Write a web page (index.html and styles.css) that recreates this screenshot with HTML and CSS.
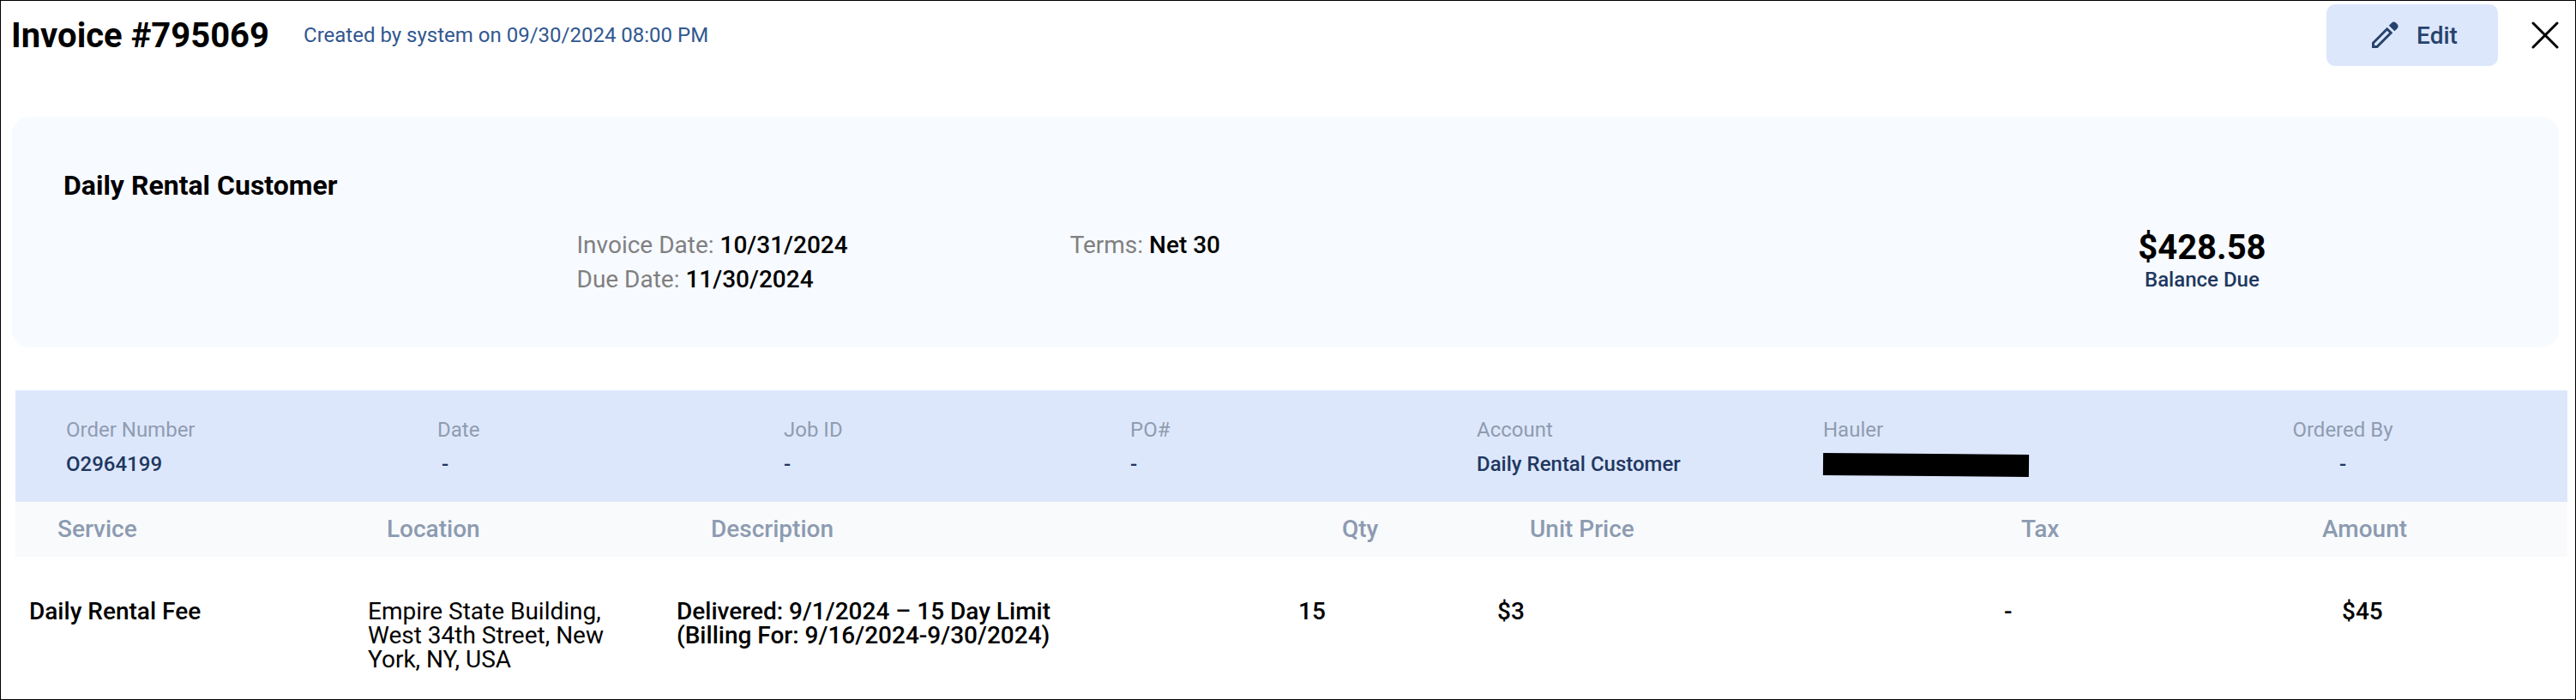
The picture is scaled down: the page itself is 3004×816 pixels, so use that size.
FILE: index.html
```html
<!DOCTYPE html>
<html lang="en">
<head>
    <meta charset="UTF-8">
    <meta name="viewport" content="width=device-width, initial-scale=1.0">
    <title>Invoice #795069</title>
    <link rel="stylesheet" href="styles.css">
</head>
<body>
    <header class="page-header">
        <h1>Invoice #795069</h1>
        <p class="created">Created by system on 09/30/2024 08:00 PM</p>
        <button type="button" class="edit-button">
            <svg width="32" height="32" viewBox="0 0 32 32" aria-hidden="true">
                <path d="M1.5 29.5V25L17.7 8.8L22.2 13.3L6 29.5Z" fill="none" stroke="currentColor" stroke-width="3"/>
                <path d="M19.8 4.8L22.7 1.9C24.8 -.2 26.8 .2 28.5 2C30.8 4.2 31.5 6 29.3 8.4L26.4 11.3Z" fill="currentColor"/>
            </svg>
            Edit
        </button>
        <button type="button" class="close-button" aria-label="Close">
            <svg width="32" height="32" viewBox="0 0 32 32" aria-hidden="true">
                <path d="M2 2L30 30M30 2L2 30" fill="none" stroke="currentColor" stroke-width="3" stroke-linecap="round"/>
            </svg>
        </button>
    </header>

    <main>
        <section class="summary">
            <h2>Daily Rental Customer</h2>
            <div class="summary-row">
                <div class="dates">
                    <p>Invoice Date: <strong>10/31/2024</strong></p>
                    <p>Due Date: <strong>11/30/2024</strong></p>
                </div>
                <div class="terms">
                    <p>Terms: <strong>Net 30</strong></p>
                </div>
                <div class="balance">
                    <p class="balance-amount">$428.58</p>
                    <p class="balance-label">Balance Due</p>
                </div>
            </div>
        </section>

        <section class="order">
            <dl class="order-info">
                <div>
                    <dt>Order Number</dt>
                    <dd>O2964199</dd>
                </div>
                <div class="order-date">
                    <dt>Date</dt>
                    <dd>-</dd>
                </div>
                <div>
                    <dt>Job ID</dt>
                    <dd>-</dd>
                </div>
                <div>
                    <dt>PO#</dt>
                    <dd>-</dd>
                </div>
                <div>
                    <dt>Account</dt>
                    <dd>Daily Rental Customer</dd>
                </div>
                <div>
                    <dt>Hauler</dt>
                    <dd><span class="redacted"></span></dd>
                </div>
                <div class="ordered-by">
                    <dt>Ordered By</dt>
                    <dd>-</dd>
                </div>
            </dl>

            <table class="items">
                <thead>
                    <tr>
                        <th>Service</th>
                        <th>Location</th>
                        <th>Description</th>
                        <th>Qty</th>
                        <th>Unit Price</th>
                        <th>Tax</th>
                        <th>Amount</th>
                    </tr>
                </thead>
                <tbody>
                    <tr>
                        <td>Daily Rental Fee</td>
                        <td class="location">Empire State Building, West 34th Street, New York, NY, USA</td>
                        <td>Delivered: 9/1/2024 – 15 Day Limit<br>(Billing For: 9/16/2024-9/30/2024)</td>
                        <td>15</td>
                        <td>$3</td>
                        <td>-</td>
                        <td>$45</td>
                    </tr>
                </tbody>
            </table>
        </section>
    </main>
</body>
</html>
```
FILE: styles.css
```css
* {
    box-sizing: border-box;
}

body {
    margin: 0;
    min-height: 100vh;
    border: 1px solid #000;
    font-family: Roboto, "Liberation Sans", sans-serif;
    font-size: 28px;
    background-color: #fff;
    color: #000;
}

h1, h2, p, dl, dd {
    margin: 0;
}

button {
    border: none;
    font-family: inherit;
    cursor: pointer;
}

/* Header */
.page-header {
    display: flex;
    align-items: center;
    padding: 4px 17px 0 12px;
}

.page-header h1 {
    font-size: 40px;
    font-weight: 700;
}

.created {
    margin-left: 40px;
    font-size: 24px;
    color: #315790;
}

.edit-button {
    display: flex;
    align-items: center;
    justify-content: center;
    gap: 20px;
    width: 200px;
    height: 72px;
    margin-left: auto;
    padding: 0 0 0 6px;
    border-radius: 10px;
    background-color: #dde7fc;
    color: #27436d;
    font-size: 28px;
    font-weight: 500;
}

.close-button {
    display: flex;
    margin-left: 37px;
    padding: 2px;
    background: none;
    color: #000;
}

/* Customer summary */
.summary {
    margin: 59px 19px 0 13px;
    padding: 60px 60px 59px;
    border-radius: 20px;
    background-color: #f7faff;
}

.summary h2 {
    font-size: 32px;
    line-height: 40px;
    font-weight: 700;
}

.summary-row {
    display: grid;
    grid-template-columns: 575fr 964fr 712fr;
    margin-left: 21%;
    padding-top: 30px;
    line-height: 40px;
    color: #808080;
}

.summary-row strong {
    font-weight: 500;
    color: #000;
}

.balance {
    justify-self: center;
    padding-top: 6px;
    text-align: center;
}

.balance-amount {
    font-size: 40px;
    line-height: 34px;
    font-weight: 700;
    color: #000;
}

.balance-label {
    font-size: 24px;
    font-weight: 500;
    color: #203760;
}

/* Order */
.order {
    margin: 50px 9px 0 17px;
}

.order-info {
    display: grid;
    grid-template-columns: 433fr 404fr 404fr 404fr 404fr 404fr 404fr;
    padding: 26px 60px 24px 59px;
    background-color: #dde7fc;
    font-size: 24px;
    line-height: 40px;
}

.order-info dt {
    color: #8f9cb0;
}

.order-info dd {
    font-weight: 500;
    color: #203760;
}

.order-date dd {
    padding-left: 5px;
}

.ordered-by {
    text-align: center;
}

.redacted {
    display: block;
    width: 240px;
    height: 26px;
    margin-top: 8px;
    background-color: #000;
    transform: rotate(0.5deg);
}

/* Line items */
.items {
    display: block;
    text-align: left;
}

.items thead,
.items tbody {
    display: block;
}

.items tr {
    display: grid;
}

.items th,
.items td {
    padding: 0;
    font-weight: 500;
}

.items thead tr {
    grid-template-columns: 384fr 378fr 736fr 219fr 573fr 351fr 286fr;
    padding: 12px 0 12px 49px;
    background-color: #f9fafc;
    line-height: 40px;
    color: #8c9bb1;
}

.items tbody tr {
    grid-template-columns: 395fr 360fr 725fr 232fr 591fr 394fr 263fr;
    padding: 50px 0 24px 16px;
    line-height: 28px;
}

.items .location {
    padding-right: 48px;
    font-weight: 400;
}
```
